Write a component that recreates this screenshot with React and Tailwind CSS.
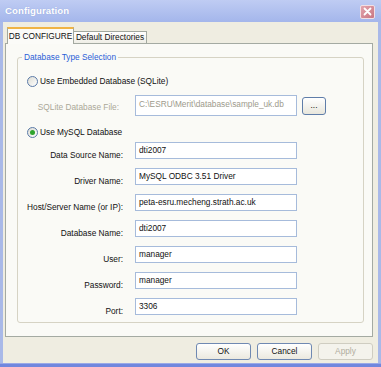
import React from 'react';

const fields = [
  { label: 'Data Source Name:', value: 'dti2007' },
  { label: 'Driver Name:', value: 'MySQL ODBC 3.51 Driver' },
  { label: 'Host/Server Name (or IP):', value: 'peta-esru.mecheng.strath.ac.uk' },
  { label: 'Database Name:', value: 'dti2007' },
  { label: 'User:', value: 'manager' },
  { label: 'Password:', value: 'manager' },
  { label: 'Port:', value: '3306' },
];

function Radio({ checked, label }) {
  return (
    <div className="flex items-center h-[11px]">
      <span className="ml-[9px] w-[11px] h-[11px] rounded-full border border-[#5b7aa8] bg-linear-to-br from-[#dcdcd4] to-white flex items-center justify-center">
        {checked && <span className="w-[5px] h-[5px] rounded-full bg-[#2ea42e]" />}
      </span>
      <span className="ml-[2px] text-[#111]">{label}</span>
    </div>
  );
}

function Field({ label, value, first }) {
  return (
    <div className={`flex items-start h-[17px] ${first ? 'mt-[4px]' : 'mt-[9px]'}`}>
      <span className="w-[105px] text-right pt-[8px] leading-[10px] text-[#111]">{label}</span>
      <div className="ml-[12px] w-[162px] h-[17px] border border-[#a6bbdb] bg-white px-[3px] pt-[2px] leading-[10px] text-[#111]">
        {value}
      </div>
    </div>
  );
}

function Button({ children, disabled }) {
  return (
    <button
      className={`w-[55px] h-[17px] rounded-[3px] border flex items-center justify-center ${
        disabled
          ? 'border-[#cfcdc1] bg-[#f4f3ec] text-[#b0ad9f]'
          : 'border-[#6f89b2] bg-linear-to-b from-white to-[#ebe9df] text-[#111]'
      }`}
    >
      {children}
    </button>
  );
}

export default function App() {
  return (
    <div className="w-[381px] h-[367px] flex flex-col bg-[#a9b9e8] font-['Liberation_Sans',Arial,sans-serif] text-[8.3px] select-none">
      {/* title bar */}
      <div className="h-[22px] flex items-center justify-between bg-linear-to-b from-[#bfccf3] to-[#a4b6eb] pl-[5px] pr-[6px]">
        <span className="text-white font-bold text-[9.6px] tracking-[0.1px] [text-shadow:0_0_1px_#8da0d6]">Configuration</span>
        <div className="w-[15px] h-[14px] mt-[1px] rounded-[2px] border border-[#f1dfe4] bg-linear-to-br from-[#e2a4ad] to-[#c97682] flex items-center justify-center">
          <svg width="9" height="9" viewBox="0 0 9 9">
            <path d="M1.5 1.5 L7.5 7.5 M7.5 1.5 L1.5 7.5" stroke="white" strokeWidth="1.8" strokeLinecap="round" />
          </svg>
        </div>
      </div>

      {/* body */}
      <div className="mx-[3px] h-[341px] bg-[#efede1] flex flex-col">
        {/* tabs */}
        <div className="flex items-end ml-[4px] mt-[5px] h-[16px]">
          <div className="relative z-10 h-[17px] -mb-[1px] w-[67px] bg-[#fbfbf8] border-x border-[#a2a89f] border-t-2 border-t-[#f0b445] flex items-center justify-center pb-[1px] text-[#111]">
            DB CONFIGURE
          </div>
          <div className="h-[12px] w-[73px] bg-linear-to-b from-white to-[#efeee6] border-t border-r border-[#a2a89f] flex items-center justify-center text-[#111]">
            Default Directories
          </div>
        </div>

        {/* panel */}
        <div className="ml-[2px] mr-[5px] h-[294px] border border-[#a4aaa2] bg-[#fafaf6] pt-[8px] px-[11px]">
          <fieldset className="border border-[#d6d3c4] rounded-[3px] pb-[7px] w-[347px]">
            <legend className="ml-[4px] px-[2px] leading-[10px] text-[#2a5ed6]">Database Type Selection</legend>

            <div className="mt-[14px]">
              <Radio label="Use Embedded Database (SQLite)" />
            </div>

            <div className="flex items-start mt-[8px] h-[21px]">
              <span className="w-[101px] text-right pt-[7px] leading-[10px] text-[#aba898]">SQLite Database File:</span>
              <div className="ml-[16px] w-[162px] h-[21px] border border-[#a6bbdb] bg-white px-[3px] pt-[3px] leading-[10px] text-[#9d9a8c]">
                C:\ESRU\Merit\database\sample_uk.db
              </div>
              <button className="ml-[5px] mt-[2px] w-[24px] h-[18px] rounded-[3px] border border-[#5f7da9] bg-linear-to-b from-white to-[#e8e6dc] leading-[10px] text-[#111] pb-[2px]">
                ...
              </button>
            </div>

            <div className="mt-[11px]">
              <Radio checked label="Use MySQL Database" />
            </div>

            {fields.map((f, i) => (
              <Field key={f.label} label={f.label} value={f.value} first={i === 0} />
            ))}
          </fieldset>
        </div>

        {/* buttons */}
        <div className="flex justify-end gap-[6px] mt-[6px] mr-[5px]">
          <Button>OK</Button>
          <Button>Cancel</Button>
          <Button disabled>Apply</Button>
        </div>
      </div>
      <div className="flex-1 bg-[#7187de] border-t border-[#9aa9e6]" />
    </div>
  );
}
